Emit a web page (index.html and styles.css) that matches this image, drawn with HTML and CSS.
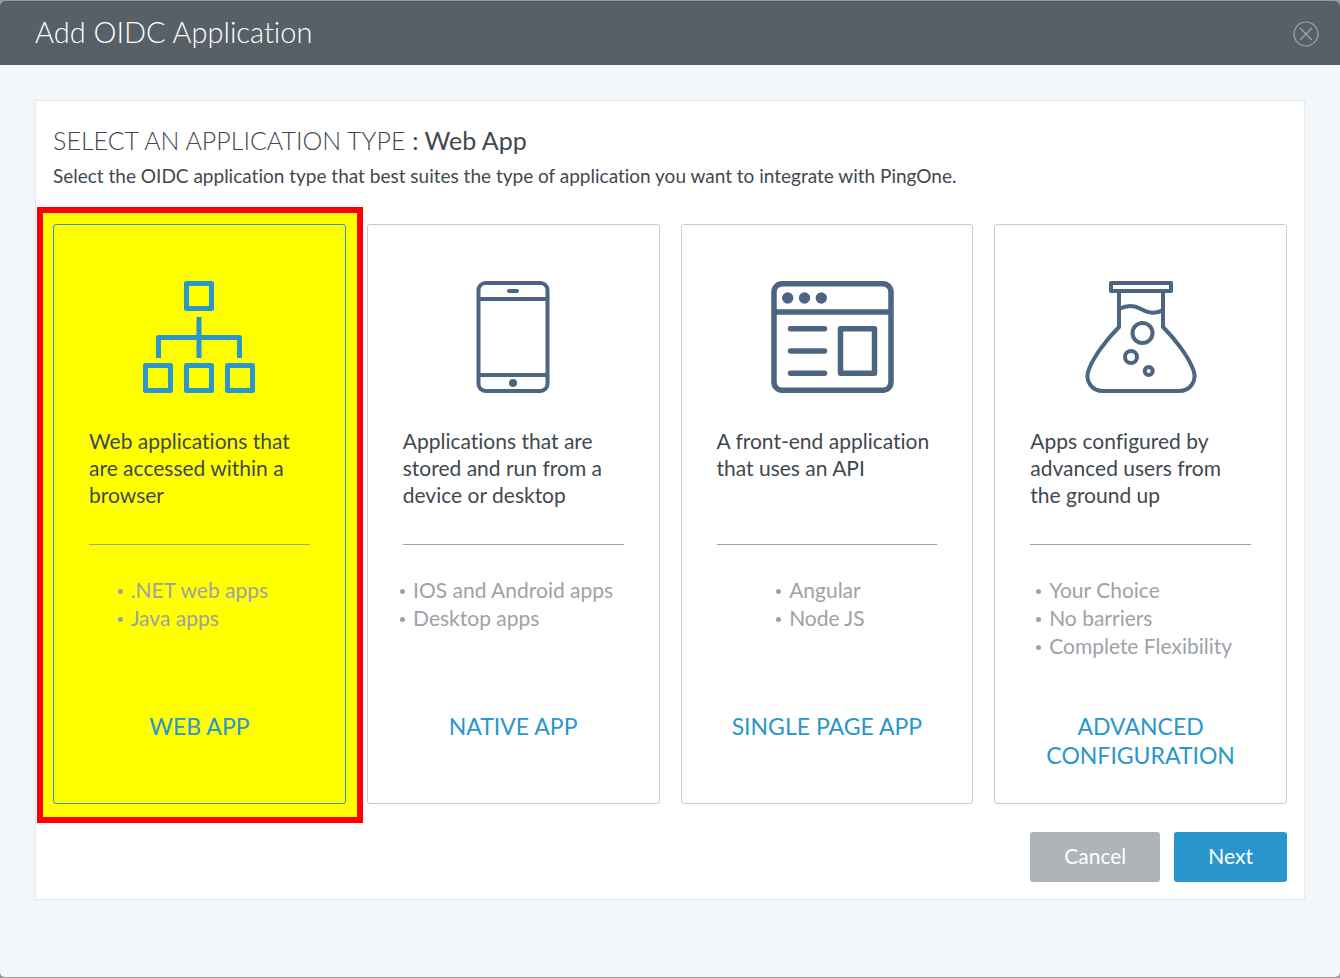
FILE: index.html
```html
<!DOCTYPE html>
<html lang="en">
<head>
<meta charset="utf-8">
<title>Add OIDC Application</title>
<link rel="stylesheet" href="styles.css">
</head>
<body>
<main class="modal">
  <header class="modal-header">
    <h1 class="modal-title">Add OIDC Application</h1>
    <button class="close" type="button" aria-label="Close">
      <svg width="26" height="26" viewBox="0 0 26 26" fill="none" stroke="currentColor" stroke-width="1.1"><circle cx="13" cy="13" r="12"/><path d="M7 7l12 12M19 7L7 19"/></svg>
    </button>
  </header>
  <form class="panel">
    <h2 class="heading">SELECT AN APPLICATION TYPE <span class="heading-value">: Web App</span></h2>
    <p class="intro">Select the OIDC application type that best suites the type of application you want to integrate with PingOne.</p>
    <div class="cards" role="radiogroup" aria-label="Application type">
      <label class="card card-selected">
        <input class="card-input" type="radio" name="type" value="web" checked>
        <svg class="icon" width="112" height="112" viewBox="0 0 112 112" fill="none" stroke="currentColor" stroke-width="5" stroke-linejoin="round"><path d="M43.500 2.500h25v25h-25zM2.500 84.500h25v25h-25zM43.500 84.500h25v25h-25zM84.500 84.500h25v25h-25zM56 36v41M15.500 77V56.500h81V77"/></svg>
        <span class="description">Web applications that are accessed within a browser</span>
        <ul class="examples"><li>.NET web apps</li><li>Java apps</li></ul>
        <span class="name">WEB APP</span>
      </label>
      <label class="card">
        <input class="card-input" type="radio" name="type" value="native">
        <svg class="icon" width="74" height="112" viewBox="0 0 74 112" fill="none" stroke="currentColor" stroke-width="4"><rect x="2.500" y="2" width="69" height="108" rx="7"/><path d="M3 18h68M3 94h68"/><path d="M33 10h8" stroke-linecap="round"/><circle cx="37" cy="102" r="4" fill="currentColor" stroke="none"/></svg>
        <span class="description">Applications that are stored and run from a device or desktop</span>
        <ul class="examples"><li>IOS and Android apps</li><li>Desktop apps</li></ul>
        <span class="name">NATIVE APP</span>
      </label>
      <label class="card">
        <input class="card-input" type="radio" name="type" value="spa">
        <svg class="icon" width="134" height="112" viewBox="-11 0 134 112" fill="none" stroke="currentColor" stroke-width="5.500"><rect x="3" y="2.800" width="117" height="106.400" rx="8"/><path d="M4 31h115"/><path d="M19.500 47.700h34M19.500 70h34M19.500 92.300h34" stroke-linecap="round"/><path d="M69.500 47.700h34v44.600h-34z" stroke-linejoin="round"/><g fill="currentColor" stroke="none"><circle cx="16.700" cy="17" r="5.700"/><circle cx="33.500" cy="17" r="5.700"/><circle cx="50.300" cy="17" r="5.700"/></g></svg>
        <span class="description">A front-end application that uses an API</span>
        <ul class="examples"><li>Angular</li><li>Node JS</li></ul>
        <span class="name">SINGLE PAGE APP</span>
      </label>
      <label class="card">
        <input class="card-input" type="radio" name="type" value="advanced">
        <svg class="icon" width="112" height="112" viewBox="0 0 112 112" fill="none" stroke="currentColor" stroke-width="4"><path d="M26 2h60v8H26z" stroke-linejoin="round"/><path d="M34 11v35C22 58 9 75 4 88c-5 12 3 22 14 22h76c11 0 19-10 14-22-5-13-18-30-30-42V11"/><path d="M34 28c8-4 15-4 22 0s14 6 22 1"/><circle cx="57.500" cy="52" r="10"/><circle cx="46" cy="76" r="6"/><circle cx="63.700" cy="90" r="4"/></svg>
        <span class="description">Apps configured by advanced users from the ground up</span>
        <ul class="examples"><li>Your Choice</li><li>No barriers</li><li>Complete Flexibility</li></ul>
        <span class="name">ADVANCED CONFIGURATION</span>
      </label>
    </div>
    <div class="actions">
      <button class="button button-cancel" type="button">Cancel</button>
      <button class="button button-next" type="submit">Next</button>
    </div>
  </form>
</main>
</body>
</html>
```
FILE: styles.css
```css
* { box-sizing: border-box; }
body {
  margin: 0;
  padding: 1px 0;
  background: #999;
  color: #3f4850;
  font-family: Lato, "Open Sans", sans-serif;
  font-variant-ligatures: none;
}
.modal {
  min-height: calc(100vh - 2px);
  background: #f3f7fa;
  border-radius: 5px;
  overflow: hidden;
}
.modal-header {
  display: flex;
  align-items: flex-start;
  justify-content: space-between;
  height: 64px;
  padding: 13px 21px 0 35px;
  background: #586067;
}
.modal-title {
  margin: 0;
  color: #fff;
  font-size: 29px;
  font-weight: 300;
  line-height: 36px;
}
.close {
  display: flex;
  margin-top: 7px;
  padding: 0;
  border: 0;
  background: none;
  color: #a2a7ab;
}
.panel {
  margin: 35px;
  padding: 23px 17px 17px;
  background: #fff;
  border: 1px solid #e4e9ed;
}
.heading {
  margin: 0;
  font-size: 25px;
  font-weight: 300;
  line-height: 32px;
}
.heading-value { font-weight: 400; }
.intro {
  margin: 7px 0 36px;
  font-size: 19px;
  line-height: 25px;
}
.cards {
  display: grid;
  grid-template-columns: repeat(4, 1fr);
  gap: 21px;
  isolation: isolate;
}
.card {
  position: relative;
  display: flex;
  flex-direction: column;
  padding: 56px 35px 33px;
  border: 1px solid #c3cdd5;
  border-radius: 3px;
}
.card-selected { border-color: #2996cc; }
.card-selected::before {
  content: "";
  position: absolute;
  z-index: -1;
  inset: -18px -18px -20px -17px;
  background: #ff0;
  border: 6px solid #f00;
}
.card-input {
  position: absolute;
  opacity: 0;
}
.icon {
  align-self: center;
  color: #4c6580;
}
.card-selected .icon { color: #2996cc; }
.description {
  min-height: 118px;
  margin-top: 34px;
  border-bottom: 1px solid #9da2a8;
  font-size: 21px;
  line-height: 27px;
}
.examples {
  align-self: center;
  min-height: 84px;
  margin: 31px 0 52px;
  padding: 0;
  list-style: none;
  color: #9da2a8;
  font-size: 21px;
  line-height: 28px;
  white-space: nowrap;
}
.examples li { position: relative; }
.examples li::before {
  content: "";
  position: absolute;
  top: 13px;
  left: -13px;
  width: 5px;
  height: 5px;
  border-radius: 50%;
  background: currentColor;
}
.name {
  min-height: 58px;
  margin: 0 -18px;
  color: #2996cc;
  font-size: 23px;
  line-height: 29px;
  text-align: center;
}
.actions {
  display: flex;
  justify-content: flex-end;
  gap: 14px;
  margin-top: 28px;
}
.button {
  height: 50px;
  padding: 0 34px 2px;
  border: 0;
  border-radius: 3px;
  color: #fff;
  font: 21px/28px Lato, "Open Sans", sans-serif;
}
.button-cancel { background: #aeb4b8; }
.button-next { background: #2996cc; }
```
